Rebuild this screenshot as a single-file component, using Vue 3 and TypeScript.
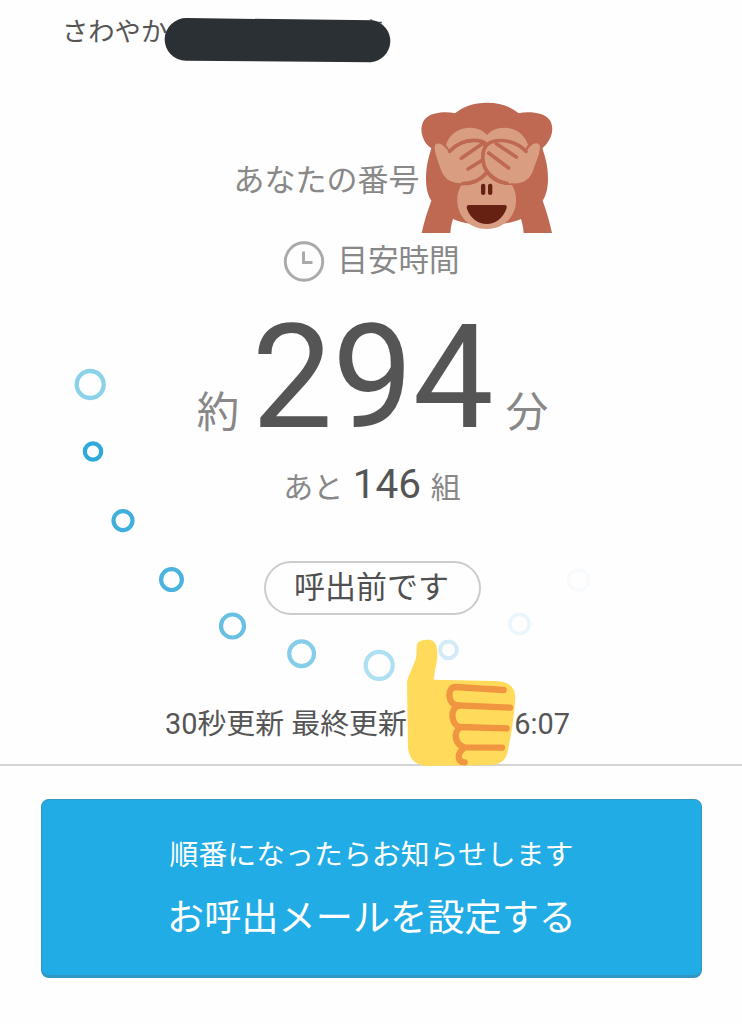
<script setup lang="ts">
interface Bubble {
  cx: number
  cy: number
  r: number
  w: number
  color: string
}

const bubbles: Bubble[] = [
  { cx: 90.2, cy: 384.5, r: 13.5, w: 4.3, color: '#8ad1e9' },
  { cx: 93, cy: 451.5, r: 8.2, w: 4.2, color: '#2fa9d9' },
  { cx: 123, cy: 520.6, r: 9.5, w: 4.2, color: '#40afdc' },
  { cx: 171.5, cy: 579.6, r: 10.4, w: 4.2, color: '#4bb4de' },
  { cx: 232.5, cy: 626, r: 11.5, w: 4.2, color: '#67c0e3' },
  { cx: 301.6, cy: 653.8, r: 12.4, w: 4.2, color: '#85cde9' },
  { cx: 379.2, cy: 665.4, r: 13.5, w: 4.2, color: '#ade0f1' },
  { cx: 448.5, cy: 649.8, r: 8.4, w: 4, color: '#d3ebf8' },
  { cx: 519.5, cy: 624, r: 9.6, w: 3.6, color: '#eaf6fc' },
  { cx: 578.5, cy: 580, r: 10.2, w: 3.2, color: '#f8fbfe' },
]
</script>

<template>
  <main class="screen">
    <header class="shop">
      <span>さわやか</span>
    </header>
    <section class="status">
      <div class="number">あなたの番号</div>
      <div class="estimate">
        <svg class="clock" viewBox="0 0 42 42">
          <circle cx="21" cy="20.5" r="18.7" />
          <path d="M20.5 10.5V21.5H29.5" />
        </svg>
        <span>目安時間</span>
      </div>
      <div class="wait">
        <span class="unit">約</span><span class="minutes">294</span><span class="unit">分</span>
      </div>
      <div class="groups">
        <span>あと</span><span class="count">146</span><span>組</span>
      </div>
      <div class="badge">呼出前です</div>
    </section>
    <footer class="updated">
      <span>30秒更新 最終更新</span><span>6:07</span>
    </footer>
    <button class="notify" type="button">
      <span class="lead">順番になったらお知らせします</span>
      <span class="action">お呼出メールを設定する</span>
    </button>

    <svg class="bubbles" viewBox="0 0 742 1024">
      <circle
        v-for="b in bubbles"
        :key="b.cx"
        :cx="b.cx"
        :cy="b.cy"
        :r="b.r"
        :stroke="b.color"
        :stroke-width="b.w"
        fill="none"
      />
    </svg>

    <svg class="marker" viewBox="0 0 230 48">
      <path d="M208 3.2V6M208 6.5H219" fill="none" stroke="#555" stroke-width="1.6" />
      <path
        d="M24 2.3 207 4.4A21.3 21.3 0 0 1 205 46.5L23 45A21.3 21.3 0 0 1 24 2.3Z"
        transform="translate(-0.5 -0.2) scale(1.016 1)"
        fill="#2b3034"
      />
    </svg>

    <svg class="monkey" viewBox="0 0 465 450">
      <path
        fill="#bf6952"
        d="M135 70C160 49 192 38 231 38S302 49 326 70C353 64 391 67 410 81C429 95 430 121 422 140C416 156 405 168 397 175C408 207 414 233 414 266C414 292 409 315 398 332C409 362 419 396 426 429H341C340 413 337 400 333 387C304 400 270 404 231 404S158 400 129 387C125 400 122 413 121 429H35C42 396 53 362 64 332C53 315 48 292 48 266C48 233 54 207 64 175C53 168 43 156 38 140C31 121 33 95 52 81C71 67 108 64 135 70Z"
      />
      <path
        fill="#d99e82"
        d="M154 285C144 302 141 318 142 336C145 384 182 417 230 417S315 384 318 336C319 318 316 302 306 285C273 286 247 274 231 254C213 274 187 285 154 285Z"
      />
      <path
        fill="#d99e82"
        d="M108 164C119 131 146 114 177 113C200 112 219 121 231 135C243 121 262 112 285 113C316 114 343 131 354 164L345 178C323 151 280 145 242 153L231 161L220 153C181 146 144 151 119 181Z"
      />
      <path
        fill="#d99e82"
        d="M80 161C94 157 104 170 119 188C147 162 181 150 216 157L225 180C216 192 214 210 219 233L229 249C205 274 176 285 147 279C118 277 101 263 93 239C84 214 74 190 74 172C74 166 76 163 80 161Z"
      />
      <path
        fill="#d99e82"
        d="M384 161C370 156 360 169 346 188C318 158 278 148 247 155C224 162 215 188 220 219C227 257 264 285 304 280C340 283 361 267 370 239C379 213 390 190 390 171C390 166 388 163 384 161Z"
      />
      <g fill="none" stroke="#bf6952" stroke-width="11" stroke-linecap="round" stroke-linejoin="round">
        <path d="M119 184C147 154 184 146 219 155L229 163" />
        <path d="M348 184C321 155 280 146 246 155C221 163 215 190 220 217C226 249 256 275 291 280" />
        <path d="M154 205L216 162M174 237L216 211M229 249C211 271 185 281 158 281" />
        <path d="M259 161L319 201M236 189L296 234" />
      </g>
      <rect x="213" y="281" width="13" height="34" rx="6.5" fill="#662113" />
      <rect x="234" y="281" width="13" height="34" rx="6.5" fill="#662113" />
      <path
        fill="#662113"
        d="M177 345H284C290 345 292 350 289 357C279 384 256 402 230 402S181 384 171 357C169 350 171 345 177 345Z"
      />
    </svg>

    <svg class="thumb" viewBox="0 0 570 435">
      <path
        fill="#ffda5b"
        d="M65 50C66 36 75 30 95 29C112 28 119 34 124 48C130 68 127 90 121 116L116 149L302 153C342 155 360 171 361 202C359 246 349 315 338 365C332 391 316 404 287 405L98 408C62 406 43 389 39 354L36 156C41 132 61 100 64 79Z"
      />
      <g fill="none" stroke="#f19640" stroke-width="19" stroke-linecap="round" stroke-linejoin="round">
        <path d="M326 180L181 171C154 172 159 225 187 226L345 233" />
        <path d="M190 227C163 237 169 284 194 291L335 295" />
        <path d="M197 292C172 306 180 345 209 352L321 353" />
        <path d="M206 355C187 370 185 395 209 397" />
      </g>
    </svg>
  </main>
</template>

<style>
body {
  margin: 0;
  background: #fefefe;
}
</style>

<style scoped>
.screen {
  position: relative;
  width: 742px;
  height: 1024px;
  overflow: hidden;
  display: flex;
  flex-direction: column;
  background: #fefefe;
  color: #888;
  font-family: Roboto, "Noto Sans CJK JP", sans-serif;
}
.shop {
  height: 64px;
  box-sizing: border-box;
  padding: 12px 0 0 62px;
  font-size: 26.3px;
  line-height: 40px;
  color: #555;
}
.status {
  height: 551px;
  display: flex;
  flex-direction: column;
  align-items: center;
}
.number {
  margin-top: 97px;
  align-self: flex-start;
  padding-left: 233.5px;
  height: 40px;
  font-size: 31px;
  line-height: 40px;
}
.estimate {
  margin-top: 40px;
  height: 42px;
  display: flex;
  gap: 13px;
  font-size: 30.5px;
  line-height: 40px;
}
.clock {
  width: 42px;
  height: 42px;
  fill: none;
  stroke: #aaa;
  stroke-width: 2.9;
}
.wait {
  margin-top: 33px;
  margin-left: 3px;
  height: 124px;
  display: flex;
  align-items: baseline;
  line-height: 124px;
}
.unit {
  font-size: 42.5px;
  line-height: 50px;
}
.minutes {
  margin: 0 12.5px 0 12.5px;
  font-size: 144px;
  letter-spacing: -0.5px;
  color: #555;
}
.groups {
  margin-top: 19px;
  margin-left: 2px;
  height: 50px;
  display: flex;
  align-items: baseline;
  gap: 9.5px;
  font-size: 30px;
  line-height: 50px;
}
.count {
  font-size: 40.5px;
  color: #555;
}
.badge {
  margin-top: auto;
  margin-left: 3px;
  box-sizing: border-box;
  width: 217px;
  height: 54px;
  border: 2px solid #ccc;
  border-radius: 27px;
  font-size: 31px;
  line-height: 50px;
  text-align: center;
  text-indent: -2px;
  color: #505050;
}
.updated {
  height: 151px;
  box-sizing: border-box;
  padding: 89px 172px 0 165px;
  border-bottom: 2px solid #d4d4d4;
  display: flex;
  justify-content: space-between;
  font-size: 28.9px;
  line-height: 40px;
  color: #555;
  white-space: nowrap;
}
.notify {
  margin: 33px 40px 0 41px;
  height: 179px;
  padding: 35px 0 0;
  border: 1px solid #3296c2;
  border-bottom: 3px solid #3296c2;
  border-radius: 8px;
  background: #22ace5;
  color: #fff;
  font-family: inherit;
  display: flex;
  flex-direction: column;
  align-items: center;
  justify-content: flex-start;
}
.lead {
  font-size: 28.9px;
  line-height: 40px;
}
.action {
  margin-top: 18px;
  font-size: 37.2px;
  line-height: 50px;
}
.bubbles,
.marker,
.monkey,
.thumb {
  position: absolute;
}
.bubbles {
  left: 0;
  top: 0;
  width: 742px;
  height: 1024px;
  pointer-events: none;
}
.marker {
  left: 163px;
  top: 16px;
  width: 230px;
  height: 48px;
}
.monkey {
  left: 410px;
  top: 90px;
  width: 155px;
  height: 150px;
}
.thumb {
  left: 395px;
  top: 630px;
  width: 190px;
  height: 145px;
}
</style>
